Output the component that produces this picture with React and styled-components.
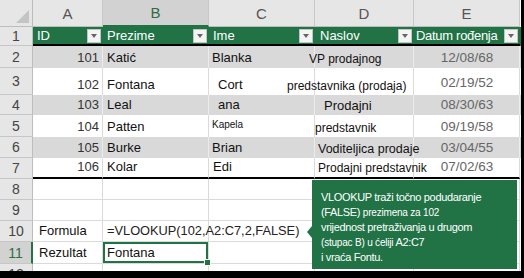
import React from 'react';
import styled, {createGlobalStyle} from 'styled-components';

const COLS = '33px 70px 106px 106px 99px 106px';
const GREEN = '#217346';

const Global = createGlobalStyle`
    body {
        margin: 0;
        background: #000;
    }
`

const Frame = styled.div`
    position: relative;
    width: 521px;
    height: 271px;
    background: #fff;
    overflow: hidden;
    font-family: "Liberation Sans", Arial, sans-serif;
`

const Row = styled.div`
    display: grid;
    grid-template-columns: ${COLS};
    height: ${p => p.$h}px;
    background: ${p => p.$bg || 'transparent'};
`

const Corner = styled.div`
    display: flex;
    align-items: flex-end;
    justify-content: flex-end;
    padding: 0 3px 3px 0;
    background: #e6e6e6;
    border-right: 1px solid #bdbdbd;
    border-bottom: 1px solid #bdbdbd;
`

const ColHead = styled.div`
    display: flex;
    align-items: center;
    justify-content: center;
    background: ${p => p.$sel ? '#d2d2d2' : '#e6e6e6'};
    color: ${p => p.$sel ? '#2f6b45' : '#555'};
    border-right: 1px solid #c8c8c8;
    border-bottom: ${p => p.$sel ? `2px solid ${GREEN}` : '1px solid #bdbdbd'};
    font-size: 15px;
    box-sizing: border-box;
`

const RowHead = styled.div`
    display: flex;
    align-items: center;
    justify-content: center;
    background: ${p => p.$sel ? '#d2d2d2' : '#e6e6e6'};
    color: ${p => p.$sel ? '#2f6b45' : '#444'};
    border-bottom: 1px solid #c6c6c6;
    border-right: ${p => p.$sel ? `2px solid ${GREEN}` : '1px solid #bdbdbd'};
    font-size: 14px;
    box-sizing: border-box;
`

const HeadCell = styled.div`
    display: flex;
    align-items: center;
    padding: 0 2px 0 ${p => p.$pl ?? 4}px;
    color: #fff;
    font-size: 13px;
    letter-spacing: ${p => p.$tight ? '-0.3px' : '0'};
    border-bottom: 2px solid #000;
    white-space: nowrap;
    min-width: 0;
`

const Filter = styled.span`
    margin-left: auto;
    width: 14px;
    height: 14px;
    box-sizing: border-box;
    background: #f4f4f4;
    border: 1px solid #c4c4c4;
    display: flex;
    align-items: center;
    justify-content: center;
    flex: none;

    &::after {
        content: '';
        border-style: solid;
        border-width: 4px 3.5px 0 3.5px;
        border-color: #666 transparent transparent transparent;
    }
`

const Cell = styled.div`
    position: relative;
    display: flex;
    align-items: flex-end;
    justify-content: ${p => p.$align === 'right' ? 'flex-end' : p.$align === 'center' ? 'center' : 'flex-start'};
    padding: 0 ${p => p.$pr ?? 3}px ${p => p.$pb ?? 2}px ${p => p.$pl ?? 4}px;
    box-sizing: border-box;
    border-right: 1px solid ${p => p.$band ? '#ececec' : '#dadada'};
    border-bottom: ${p => p.$edge === 'thick' ? '2px solid #000' : p.$edge === 'grid' ? '1px solid #dadada' : 'none'};
    box-shadow: ${p => p.$sel ? `inset 0 0 0 2px ${GREEN}` : 'none'};
    color: ${p => p.$color || '#111'};
    font-size: ${p => p.$size || 13}px;
    line-height: 16px;
    white-space: nowrap;
    min-width: 0;

    &::after {
        content: ${p => p.$sel ? "''" : 'none'};
        position: absolute;
        right: -3px;
        bottom: -3px;
        width: 5px;
        height: 5px;
        background: ${GREEN};
        border: 1px solid #fff;
        z-index: 2;
    }
`

const Shift = styled.span`
    margin-left: ${p => p.$x || 0}px;
`

const Callout = styled.div`
    position: absolute;
    left: 312px;
    top: 180px;
    width: 205px;
    height: 89px;
    box-sizing: border-box;
    padding: 10px 0 0 9px;
    background: ${GREEN};
    color: #fff;
    font-size: 11px;
    line-height: 15px;
    letter-spacing: -0.35px;
    white-space: nowrap;

    &::before {
        content: '';
        position: absolute;
        left: -5px;
        top: 46px;
        border-style: solid;
        border-width: 6px 5px 6px 0;
        border-color: transparent ${GREEN} transparent transparent;
    }
`

const Small = styled.span`
    font-size: 10px;
    letter-spacing: -0.2px;
`

const people = [
    {n: 2, id: 101, last: 'Katić', first: 'Blanka', fp: 3, title: 'VP prodajnog', ts: -10, tz: 12, date: '12/08/68', h: 22, band: true},
    {n: 3, id: 102, last: 'Fontana', first: 'Cort', fp: 9, title: 'predstavnika (prodaja)', ts: -32, tz: 12, date: '02/19/52', h: 27, db: 4},
    {n: 4, id: 103, last: 'Leal', first: 'ana', fp: 9, title: 'Prodajni', ts: 5, tz: 13, date: '08/30/63', h: 20, band: true},
    {n: 5, id: 104, last: 'Patten', first: 'Kapela', fp: 3, fz: 10, title: 'predstavnik', ts: -4, tz: 12, date: '09/19/58', h: 22},
    {n: 6, id: 105, last: 'Burke', first: 'Brian', fp: 3, title: 'Voditeljica prodaje', ts: -1, tz: 12.5, date: '03/04/55', h: 21, band: true},
    {n: 7, id: 106, last: 'Kolar', first: 'Edi', fp: 4, title: 'Prodajni predstavnik', ts: -1, tz: 12, date: '07/02/63', h: 21, last7: true},
];

const heads = [
    {label: 'ID', pl: 4},
    {label: 'Prezime', pl: 4},
    {label: 'Ime', pl: 4},
    {label: 'Naslov', pl: 5},
    {label: 'Datum rođenja', pl: 2, tight: true},
];

function App() {
    return (
        <Frame>
            <Global />
            <Row $h={27}>
                <Corner>
                    <svg width="13" height="13" viewBox="0 0 13 13">
                        <polygon points="13,0 13,13 0,13" fill="#c4c4c4" />
                    </svg>
                </Corner>
                {['A', 'B', 'C', 'D', 'E'].map(c => (
                    <ColHead key={c} $sel={c === 'B'}>{c}</ColHead>
                ))}
            </Row>

            <Row $h={19} $bg={GREEN}>
                <RowHead>1</RowHead>
                {heads.map(h => (
                    <HeadCell key={h.label} $pl={h.pl} $tight={h.tight}>
                        {h.label}
                        <Filter />
                    </HeadCell>
                ))}
            </Row>

            {people.map(p => {
                const edge = p.last7 ? 'thick' : 'none';
                return (
                    <Row key={p.n} $h={p.h} $bg={p.band ? '#d9d9d9' : '#fff'}>
                        <RowHead>{p.n}</RowHead>
                        <Cell $band={p.band} $edge={edge} $align="right" $color="#333">{p.id}</Cell>
                        <Cell $band={p.band} $edge={edge}>{p.last}</Cell>
                        <Cell $band={p.band} $edge={edge} $pl={p.fp} $size={p.fz} $pb={p.fz ? 4 : 2}>{p.first}</Cell>
                        <Cell $band={p.band} $edge={edge} $size={p.tz} $pb={1}>
                            <Shift $x={p.ts}>{p.title}</Shift>
                        </Cell>
                        <Cell $band={p.band} $edge={edge} $align="center" $size={13.5} $color="#666" $pb={p.db ?? 2}>{p.date}</Cell>
                    </Row>
                );
            })}

            <Row $h={21}>
                <RowHead>8</RowHead>
                <Cell $edge="grid" />
                <Cell $edge="grid" />
                <Cell $edge="grid" />
                <Cell $edge="grid" />
                <Cell $edge="grid" />
            </Row>
            <Row $h={21}>
                <RowHead>9</RowHead>
                <Cell $edge="grid" />
                <Cell $edge="grid" />
                <Cell $edge="grid" />
                <Cell $edge="grid" />
                <Cell $edge="grid" />
            </Row>
            <Row $h={21}>
                <RowHead>10</RowHead>
                <Cell $edge="grid" $pl={6}>Formula</Cell>
                <Cell $edge="grid" $color="#222" $size={12.8}>=VLOOKUP(102,A2:C7,2,FALSE)</Cell>
                <Cell $edge="grid" />
                <Cell $edge="grid" />
                <Cell $edge="grid" />
            </Row>
            <Row $h={22}>
                <RowHead $sel>11</RowHead>
                <Cell $edge="grid" $pl={6}>Rezultat</Cell>
                <Cell $edge="grid" $sel>Fontana</Cell>
                <Cell $edge="grid" />
                <Cell $edge="grid" />
                <Cell $edge="grid" />
            </Row>
            <Row $h={21}>
                <RowHead>12</RowHead>
                <Cell $edge="grid" />
                <Cell $edge="grid" />
                <Cell $edge="grid" />
                <Cell $edge="grid" />
                <Cell $edge="grid" />
            </Row>

            <Callout>
                <div>VLOOKUP traži točno podudaranje</div>
                <div>(FALSE) <Small>prezimena za 102</Small></div>
                <div>vrijednost pretraživanja u drugom</div>
                <div><Small>(stupac B) u ćeliji</Small> A2:C7</div>
                <div>i vraća Fontu.</div>
            </Callout>
        </Frame>
    );
}

export default App;
